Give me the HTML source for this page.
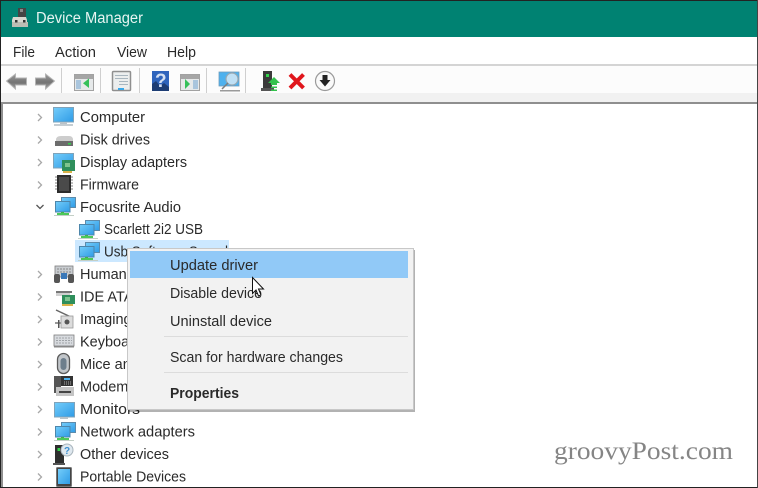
<!DOCTYPE html>
<html><head><meta charset="utf-8"><style>
html,body{margin:0;padding:0;background:#fff;overflow:hidden}
svg{display:block;filter:blur(.35px)}
text{font-family:"Liberation Sans",sans-serif;font-size:14.5px;fill:#2a2a2a}
</style></head><body>
<svg width="758" height="488" viewBox="0 0 758 488" xmlns="http://www.w3.org/2000/svg">
<defs>
<linearGradient id="blue" x1="0" y1="0" x2="1" y2="1"><stop offset="0" stop-color="#74cdfa"/><stop offset="1" stop-color="#2f9be6"/></linearGradient>
<linearGradient id="arrow" x1="0" y1="0" x2="0" y2="1"><stop offset="0" stop-color="#9a9a9a"/><stop offset=".55" stop-color="#747474"/><stop offset="1" stop-color="#a0a0a0"/></linearGradient>
<g id="mon"><rect x=".5" y=".5" width="20" height="14.500" fill="url(#blue)" stroke="#7fa3ba"/></g>
<g id="net">
<rect x="7.500" y="0.500" width="14" height="10" fill="url(#blue)" stroke="#5d8bab"/>
<rect x="1.500" y="4.500" width="14.500" height="10.500" fill="url(#blue)" stroke="#4d86ab"/>
<rect x="7" y="15" width="3" height="2" fill="#3fb54a"/>
<rect x="3" y="16" width="12" height="3" fill="#4cc85a"/>
<rect x="0" y="18" width="20" height="1" fill="#c3cfc6"/>
</g>
<g id="panel"><rect x="0.500" y="0.500" width="19" height="16" fill="#e6e9ea" stroke="#a2a2a2"/><rect x="1" y="1" width="18" height="4" fill="#a6a6a6"/></g>
</defs>

<!-- frame & bars -->
<rect width="758" height="488" fill="#fff"/>
<rect x="0" y="0" width="758" height="37" fill="#008272"/>
<rect x="0" y="64" width="758" height="2" fill="#d4d4d4"/>
<rect x="1" y="66" width="757" height="27" fill="#fcfcfc"/>
<rect x="1" y="93" width="757" height="9" fill="#f1f1f1"/>
<rect x="1" y="102" width="757" height="2" fill="#8f8f8f"/>
<rect x="1" y="102" width="2" height="385" fill="#8f8f8f"/>

<!-- title icon -->
<rect x="18" y="8" width="8" height="9" fill="#444"/>
<rect x="20" y="9" width="3" height="3" fill="#8a8a8a"/>
<path d="M13 17h13l1 3v7H12v-7z" fill="#d8d8d0"/>
<rect x="12" y="22" width="16" height="5" fill="#bdbdb4"/>
<rect x="15" y="20" width="2.500" height="2.500" fill="#333"/><rect x="23" y="20" width="2.500" height="2.500" fill="#333"/>
<text x="36" y="23" textLength="107" lengthAdjust="spacingAndGlyphs" style="fill:#e6f4f1;font-size:15.500px">Device Manager</text>

<!-- menu -->
<text x="13" y="57" textLength="22" lengthAdjust="spacingAndGlyphs">File</text>
<text x="55" y="57" textLength="41" lengthAdjust="spacingAndGlyphs">Action</text>
<text x="117" y="57" textLength="30" lengthAdjust="spacingAndGlyphs">View</text>
<text x="167" y="57" textLength="29" lengthAdjust="spacingAndGlyphs">Help</text>

<!-- toolbar -->
<path d="M6.500 81l9-7v4h11v7h-11v4z" fill="url(#arrow)" stroke="#b4b4b4"/>
<path d="M54.500 81l-9-7v4H35.500v7h10v4z" fill="url(#arrow)" stroke="#b4b4b4"/>
<g fill="#cfcfcf"><rect x="61" y="68" width="1" height="25"/><rect x="100" y="68" width="1" height="25"/><rect x="139" y="68" width="1" height="25"/><rect x="206" y="68" width="1" height="25"/><rect x="245" y="68" width="1" height="25"/></g>
<use href="#panel" x="74" y="74"/>
<rect x="76" y="80" width="5" height="9" fill="#a9c5dd"/>
<path d="M89 78.500v9.500l-6-4.750z" fill="#35c05a"/>
<rect x="112.500" y="71.500" width="18" height="19" rx="1" fill="#eceeee" stroke="#8f8f8f" stroke-width="1.500"/>
<g fill="#a9b6bf"><rect x="115" y="75" width="13" height="1"/><rect x="115" y="78" width="13" height="1"/><rect x="119" y="81" width="9" height="1"/><rect x="119" y="84" width="9" height="1"/></g>
<rect x="118" y="88" width="6" height="2" fill="#39a7e8"/>
<rect x="152" y="71" width="17" height="20" fill="#2f64bc"/>
<path d="M152 91v-7l4-3 4 5 4-3 5 4v4z" fill="#1d3d74"/>
<text x="155" y="87" style="font-size:19px;font-weight:bold;fill:#d4e0f2">?</text>
<use href="#panel" x="180" y="74"/>
<rect x="193" y="80" width="5" height="9" fill="#a9c5dd"/>
<path d="M185 79v10l5-5z" fill="#35c05a"/>
<rect x="219" y="72" width="20" height="14" fill="#4db1ee" stroke="#6f9dbc" stroke-width=".8"/>
<circle cx="232" cy="79" r="6" fill="#bfe0f5" stroke="#98a8b2" stroke-width="1.200"/>
<path d="M228 83l-6 6" stroke="#7d7d7d" stroke-width="1.500"/>
<rect x="220" y="90" width="20" height="1.500" fill="#9a9a9a"/>
<rect x="263" y="71" width="9" height="18" fill="#3a3a3a"/><rect x="261" y="88" width="13" height="3" fill="#555"/>
<rect x="266" y="74" width="3" height="3" fill="#34d24b"/>
<path d="M268 83l6-6 6 6h-3v2h-6v-2z" fill="#33c14c"/>
<rect x="271" y="86.500" width="6" height="1.500" fill="#33c14c"/><rect x="271" y="89.500" width="6" height="1.500" fill="#33c14c"/>
<path d="M290 74.500l13.500 13.500M303.500 74.500L290 88" stroke="#e0161c" stroke-width="4"/>
<circle cx="325" cy="81" r="9.500" fill="#fafafa" stroke="#9a9a9a" stroke-width="1.200"/>
<path d="M322.500 75h5v5h3l-5.500 6.500-5.500-6.500h3z" fill="#222"/>

<!-- tree chevrons -->
<g fill="none" stroke="#a8a8a8" stroke-width="1.300">
<path d="M38 114l3.500 3.500-3.500 3.500"/><path d="M38 136.500l3.500 3.500-3.500 3.500"/><path d="M38 159l3.500 3.500-3.500 3.500"/><path d="M38 181.500l3.500 3.500-3.500 3.500"/>
<path d="M38 271l3.500 3.500-3.500 3.500"/><path d="M38 293.500l3.500 3.500-3.500 3.500"/><path d="M38 316l3.500 3.500-3.500 3.500"/><path d="M38 338.500l3.500 3.500-3.500 3.500"/><path d="M38 361l3.500 3.500-3.500 3.500"/><path d="M38 383.500l3.500 3.500-3.500 3.500"/><path d="M38 406l3.500 3.500-3.500 3.500"/><path d="M38 428.500l3.500 3.500-3.500 3.500"/><path d="M38 451l3.500 3.500-3.500 3.500"/><path d="M38 473.500l3.500 3.500-3.500 3.500"/>
</g>
<path d="M36.500 205l3.500 3.500 3.500-3.500" fill="none" stroke="#555" stroke-width="1.300"/>

<!-- selection -->
<rect x="75" y="240" width="154" height="22" fill="#cce8ff"/>

<!-- tree icons -->
<use href="#mon" x="53" y="107"/><rect x="60" y="122" width="7" height="2" fill="#b9c2c8"/><rect x="54" y="124" width="19" height="2" fill="#c5cdd2"/>
<path d="M56 140q0-4 5-4h8q4 0 4 4v1H56z" fill="#cdcdcd"/><rect x="55" y="141" width="18" height="5" fill="#6c6c6c"/><rect x="68" y="143" width="3" height="1.500" fill="#34d24b"/>
<use href="#mon" x="53" y="153"/><rect x="62" y="160" width="13" height="11" fill="#2f8f5c"/><rect x="65" y="163" width="5" height="4" fill="#7fc48f"/><rect x="63" y="171" width="9" height="2" fill="#d9b24a"/>
<path d="M55 177h18M55 180h18M55 183h18M55 186h18M55 189h18" stroke="#9a9a9a" stroke-width="1.200" fill="none"/><rect x="57" y="175" width="14" height="18" fill="#2c2c2c"/><rect x="59" y="177" width="10" height="14" fill="#4a4a4a"/>
<use href="#net" x="54" y="197"/>
<use href="#net" x="78" y="220"/>
<use href="#net" x="78" y="242"/>
<rect x="55" y="266" width="18" height="11" fill="#c8ccd0" stroke="#7d7d7d" stroke-width=".8"/><path d="M57 269h14M57 272h14" stroke="#888" stroke-dasharray="2 1"/><rect x="54" y="274" width="6" height="9" rx="2" fill="#555"/><rect x="68" y="274" width="6" height="9" rx="2" fill="#555"/><rect x="61" y="273" width="6" height="6" fill="#3a78b8"/>
<path d="M56 291h14v5H56z" fill="#d0d0d0"/><rect x="56" y="291" width="16" height="2" fill="#777"/><rect x="62" y="295" width="13" height="9" fill="#2f8f5c"/><rect x="65" y="297" width="5" height="4" fill="#7fc48f"/><rect x="62" y="304" width="11" height="2" fill="#d9b24a"/>
<path d="M56 310l17 8" stroke="#666" stroke-width="1.500"/><rect x="61" y="316" width="12" height="12" fill="#dcdcdc" stroke="#999" stroke-width=".8"/><circle cx="67" cy="322" r="2.500" fill="#555"/><rect x="55" y="322" width="6" height="2" fill="#999"/><rect x="58" y="320" width="1.500" height="8" fill="#555"/>
<rect x="54" y="335" width="20" height="11" fill="#d7dade" stroke="#7e7e7e" stroke-width=".8"/><path d="M56 338h16M56 340.500h16M56 343h16" stroke="#a0a4a8" stroke-dasharray="2 1"/><rect x="54" y="346" width="20" height="1.500" fill="#888"/>
<rect x="57.500" y="353.500" width="12" height="20" rx="6" fill="#c2c6ca" stroke="#5b5b5b" stroke-width="1.300"/><rect x="60.500" y="358" width="6" height="12" rx="3" fill="#6d7e8c"/>
<rect x="54" y="376" width="7" height="17" fill="#555"/><rect x="61" y="376" width="12" height="10" fill="#333"/><rect x="64" y="378" width="6" height="2" fill="#4db1ee"/><path d="M64 382h7M64 384h7" stroke="#aaa" stroke-dasharray="1 1"/><rect x="56" y="387" width="18" height="9" fill="#c4c4c4"/><rect x="59" y="391" width="12" height="2" fill="#444"/>
<use href="#mon" x="54" y="402"/><rect x="60" y="417" width="8" height="2" fill="#b9c2c8"/>
<use href="#net" x="54" y="422"/>
<rect x="55" y="445" width="9" height="18" fill="#2e2e2e"/><rect x="53" y="463" width="12" height="2" fill="#555"/><rect x="57.500" y="448" width="2.500" height="3" fill="#34d24b"/>
<circle cx="67" cy="450" r="6" fill="#dfe8ef" stroke="#a8b4bc"/><text x="64" y="454" style="font-size:10px;font-weight:bold;fill:#3d8fd0">?</text>
<rect x="56.500" y="467.500" width="15" height="19" rx="1" fill="#444" stroke="#777"/><rect x="58" y="469" width="12" height="15" fill="url(#blue)"/>

<!-- tree text -->
<text x="80" y="122" textLength="65" lengthAdjust="spacingAndGlyphs">Computer</text>
<text x="80" y="144.500" textLength="70" lengthAdjust="spacingAndGlyphs">Disk drives</text>
<text x="80" y="167" textLength="107" lengthAdjust="spacingAndGlyphs">Display adapters</text>
<text x="80" y="189.500" textLength="59" lengthAdjust="spacingAndGlyphs">Firmware</text>
<text x="80" y="212" textLength="101" lengthAdjust="spacingAndGlyphs">Focusrite Audio</text>
<text x="104" y="234" textLength="99" lengthAdjust="spacingAndGlyphs">Scarlett 2i2 USB</text>
<text x="104" y="256.500" textLength="124" lengthAdjust="spacingAndGlyphs">Usb Software Sound</text>
<text x="80" y="279">Human Interface Devices</text>
<text x="80" y="301.500">IDE ATA/ATAPI controllers</text>
<text x="80" y="324">Imaging devices</text>
<text x="80" y="346.500">Keyboards</text>
<text x="80" y="369">Mice and other pointing devices</text>
<text x="80" y="391.500">Modems</text>
<text x="80" y="414" textLength="60" lengthAdjust="spacingAndGlyphs">Monitors</text>
<text x="80" y="436.500" textLength="115" lengthAdjust="spacingAndGlyphs">Network adapters</text>
<text x="80" y="459" textLength="89" lengthAdjust="spacingAndGlyphs">Other devices</text>
<text x="80" y="481.500" textLength="106" lengthAdjust="spacingAndGlyphs">Portable Devices</text>

<!-- context menu -->
<rect x="129" y="250" width="286" height="162" fill="#000" opacity=".3"/>
<rect x="127.500" y="248.500" width="286" height="161" fill="#f2f2f2" stroke="#c8c8c8"/>
<rect x="130" y="251" width="278" height="27" fill="#91c9f7"/>
<rect x="164" y="336" width="244" height="1" fill="#dcdcdc"/>
<rect x="164" y="372" width="244" height="1" fill="#dcdcdc"/>
<text x="170" y="270" textLength="88" lengthAdjust="spacingAndGlyphs">Update driver</text>
<text x="170" y="298" textLength="92" lengthAdjust="spacingAndGlyphs">Disable device</text>
<text x="170" y="326" textLength="102" lengthAdjust="spacingAndGlyphs">Uninstall device</text>
<text x="170" y="362" textLength="173" lengthAdjust="spacingAndGlyphs">Scan for hardware changes</text>
<text x="170" y="398" textLength="69" lengthAdjust="spacingAndGlyphs" style="font-weight:bold">Properties</text>

<!-- cursor -->
<path d="M252.500 277.500v16l3.500-3.500 2.500 6 2.500-1-2.500-6h5z" fill="#fff" stroke="#111" stroke-width="1"/>

<!-- watermark -->
<text x="554" y="459" textLength="179" lengthAdjust="spacingAndGlyphs" style="font-family:'Liberation Serif',serif;font-size:25px;fill:#858585">groovyPost.com</text>

<!-- outer edge -->
<rect x="0" y="0" width="758" height="1" fill="#222"/>
<rect x="0" y="0" width="1" height="488" fill="#222"/>
<rect x="0" y="487" width="758" height="1" fill="#222"/>
<rect x="757" y="0" width="1" height="488" fill="#444"/>
</svg>
</body></html>
